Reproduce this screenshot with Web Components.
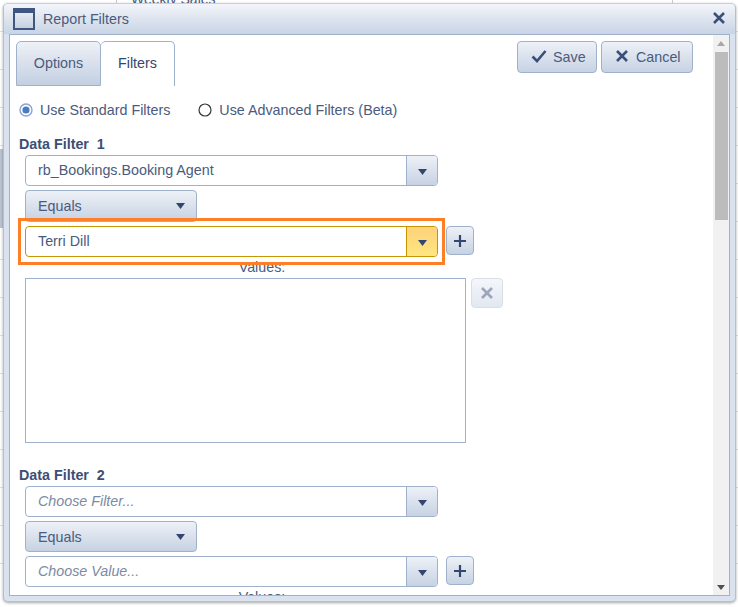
<!DOCTYPE html>
<html>
<head>
<meta charset="utf-8">
<title>Report Filters</title>
<style>
  html, body { margin: 0; height: 100%; overflow: hidden; background: #fff; }
  body { font: 14.3px "Liberation Sans", Arial, sans-serif; color: #4a5b7d; }
</style>
</head>
<body>
<page-backdrop></page-backdrop>
<report-dialog heading="Report Filters">
  <tab-bar slot="top">
    <tab-item>Options</tab-item>
    <tab-item active>Filters</tab-item>
    <action-button slot="actions" icon="check">Save</action-button>
    <action-button slot="actions" icon="cross">Cancel</action-button>
  </tab-bar>
  <radio-row>
    <radio-option checked>Use Standard Filters</radio-option>
    <radio-option>Use Advanced Filters (Beta)</radio-option>
  </radio-row>
  <data-filter number="1" field="rb_Bookings.Booking Agent" value="Terri Dill" highlight></data-filter>
  <data-filter number="2" placeholder></data-filter>
</report-dialog>

<script>
const ICONS = {
  check: '<svg width="16" height="14" viewBox="0 0 16 14"><path d="M1.5 7.5 6 12 14.5 2" fill="none" stroke="#3c4f78" stroke-width="2.6"/></svg>',
  cross: '<svg width="12" height="12" viewBox="0 0 12 12"><path d="M1 1 11 11M11 1 1 11" fill="none" stroke="#3c4f78" stroke-width="2.6"/></svg>',
  plus: '<svg width="12" height="12" viewBox="0 0 12 12"><path d="M6 0V12M0 6H12" fill="none" stroke="#33466e" stroke-width="2.2"/></svg>',
  arrow: '<svg width="9" height="6" viewBox="0 0 9 6"><path d="M0 0H9L4.5 6Z" fill="#33466e"/></svg>'
};

// Faint report page showing behind the dialog
class PageBackdrop extends HTMLElement {
  constructor() {
    super();
    this.attachShadow({ mode: 'open' }).innerHTML = `
      <style>
        :host {
          position: absolute;
          inset: 0;
          overflow: hidden;
          background: repeating-linear-gradient(#fff 0 37px, #e2e2e2 37px 38px) 0 -6px;
        }
        .title { position: absolute; left: 131px; top: -9px; font-size: 14px; color: #4a5b7d; }
        .line { position: absolute; top: 0; width: 1px; height: 4px; background: #ccc; }
        .side { position: absolute; left: 0; top: 149px; width: 4px; height: 79px; background: #bcc5d2; }
      </style>
      <span class="title">Weekly Sales</span>
      <i class="line" style="left:116px"></i>
      <i class="line" style="left:672px"></i>
      <i class="side"></i>
    `;
  }
}

class ReportDialog extends HTMLElement {
  constructor() {
    super();
    this.attachShadow({ mode: 'open' }).innerHTML = `
      <style>
        :host {
          position: absolute;
          left: 3px;
          top: 3px;
          width: 733px;
          height: 599px;
          box-sizing: border-box;
          display: flex;
          flex-direction: column;
          background: #d9e2ee;
          border: 1px solid #b4c0d2;
          border-top-color: #c5cfdf;
          border-radius: 5px;
          box-shadow: 0 1px 3px rgba(0, 0, 0, 0.35);
          overflow: hidden;
        }
        .titlebar {
          flex: none;
          height: 30px;
          display: flex;
          align-items: center;
          gap: 8px;
          padding: 0 10px 0 9px;
          background: linear-gradient(#f3f5fa, #c8d4e5);
          color: #4a5b7d;
        }
        .winicon {
          width: 22px;
          height: 22px;
          box-sizing: border-box;
          border: 2px solid #3f5680;
          border-top-width: 5px;
          background: linear-gradient(#e6ebf3, #c5d0e0);
        }
        .name { flex: 1; }
        .close { display: flex; margin-top: -2px; }
        .body {
          flex: none;
          height: 562px;
          margin: 0 5px;
          box-sizing: border-box;
          display: flex;
          border: 1px solid #a0b1cc;
          background: #fff;
        }
        .pane { flex: 1; min-width: 0; overflow: hidden; padding: 6px 0 0 6px; }
        .scroll {
          flex: none;
          width: 16px;
          display: flex;
          flex-direction: column;
          align-items: center;
          background: #f1f1f1;
        }
        .up, .down { flex: none; width: 0; height: 0; border: 4px solid transparent; }
        .up { margin-top: 6px; border-top: 0; border-bottom: 5px solid #a8a8a8; }
        .down { margin-top: auto; margin-bottom: 5px; border-bottom: 0; border-top: 5px solid #505050; }
        .thumb { width: 13px; height: 168px; margin-top: 6px; background: #bcbcbc; }
      </style>
      <div class="titlebar">
        <span class="winicon"></span>
        <span class="name"></span>
        <span class="close">${ICONS.cross}</span>
      </div>
      <div class="body">
        <div class="pane"><slot name="top"></slot><slot></slot></div>
        <div class="scroll"><i class="up"></i><i class="thumb"></i><i class="down"></i></div>
      </div>
    `;
  }

  connectedCallback() {
    this.shadowRoot.querySelector('.name').textContent = this.getAttribute('heading') || '';
  }
}

class TabBar extends HTMLElement {
  constructor() {
    super();
    this.attachShadow({ mode: 'open' }).innerHTML = `
      <style>
        :host { display: flex; height: 45px; align-items: flex-start; padding-right: 20px; }
        .tabs { display: flex; flex: 1; }
        .actions { display: flex; gap: 4px; }
      </style>
      <div class="tabs"><slot></slot></div>
      <div class="actions"><slot name="actions"></slot></div>
    `;
  }
}

class TabItem extends HTMLElement {
  constructor() {
    super();
    this.attachShadow({ mode: 'open' }).innerHTML = `
      <style>
        :host {
          display: flex;
          align-items: center;
          justify-content: center;
          box-sizing: border-box;
          width: 85px;
          height: 45px;
          padding-bottom: 2px;
          border: 1px solid #a0b1cc;
          border-radius: 5px 5px 0 0;
          background: linear-gradient(#eef1f7, #c3cfe1);
          color: #4a5b7d;
        }
        :host([active]) {
          width: 74px;
          border-left: 0;
          border-bottom: 0;
          background: #fff;
          color: #33466e;
        }
      </style>
      <slot></slot>
    `;
  }
}

class ActionButton extends HTMLElement {
  constructor() {
    super();
    this.attachShadow({ mode: 'open' }).innerHTML = `
      <style>
        :host {
          display: flex;
          align-items: center;
          box-sizing: border-box;
          width: 80px;
          height: 32px;
          padding-left: 13px;
          gap: 6px;
          border: 1px solid #a0b1cc;
          border-radius: 4px;
          background: linear-gradient(#eef1f7, #c6d2e3);
          color: #4a5b7d;
        }
        :host([icon="cross"]) { width: 92px; padding-left: 14px; gap: 8px; }
        .icon { display: flex; margin-top: -2px; }
      </style>
      <span class="icon"></span><slot></slot>
    `;
  }

  connectedCallback() {
    this.shadowRoot.querySelector('.icon').innerHTML = ICONS[this.getAttribute('icon')] || '';
  }
}

class RadioRow extends HTMLElement {
  constructor() {
    super();
    this.attachShadow({ mode: 'open' }).innerHTML = `
      <style>
        :host { display: flex; gap: 28px; height: 18px; margin: 15px 0 0 3px; align-items: center; }
      </style>
      <slot></slot>
    `;
  }
}

class RadioOption extends HTMLElement {
  constructor() {
    super();
    this.attachShadow({ mode: 'open' }).innerHTML = `
      <style>
        :host { display: flex; align-items: center; gap: 7px; color: #4a5b7d; }
        svg { display: block; }
      </style>
      <span class="mark"></span><slot></slot>
    `;
  }

  connectedCallback() {
    const mark = this.hasAttribute('checked')
      ? '<circle cx="7" cy="7" r="6" fill="#fff" stroke="#8aa3cf" stroke-width="1.4"/><circle cx="7" cy="7" r="3.6" fill="#4a7cc4"/>'
      : '<circle cx="7" cy="7" r="6" fill="#fff" stroke="#333" stroke-width="1.2"/>';
    this.shadowRoot.querySelector('.mark').innerHTML =
      `<svg width="14" height="14" viewBox="0 0 14 14">${mark}</svg>`;
  }
}

class ComboBox extends HTMLElement {
  constructor() {
    super();
    this.attachShadow({ mode: 'open' }).innerHTML = `
      <style>
        :host {
          position: relative;
          display: flex;
          box-sizing: border-box;
          width: 413px;
          height: 31px;
          border: 1px solid #a0b1cc;
          border-radius: 4px;
          background: #fff;
          color: #4a5b7d;
        }
        .text { flex: 1; display: flex; align-items: center; padding: 0 0 2px 12px; }
        .btn {
          width: 30px;
          display: flex;
          align-items: center;
          justify-content: center;
          padding-top: 2px;
          border-left: 1px solid #a0b1cc;
          border-radius: 0 3px 3px 0;
          background: linear-gradient(#eef1f7, #c6d2e3);
        }
        .mark { display: none; }
        :host([placeholder]) .text { font-style: italic; color: #7c8aa4; }
        :host([highlight]) { border-color: #c69500; }
        :host([highlight]) .btn { border-left-color: #c69500; background: linear-gradient(#fdd27a, #ffe680); }
        :host([highlight]) .mark {
          display: block;
          position: absolute;
          left: -8px;
          right: -8px;
          top: -9px;
          bottom: -9px;
          border: 3px solid #ff7f27;
          pointer-events: none;
        }
      </style>
      <div class="text"><slot></slot></div>
      <div class="btn">${ICONS.arrow}</div>
      <div class="mark"></div>
    `;
  }
}

class OperatorSelect extends HTMLElement {
  constructor() {
    super();
    this.attachShadow({ mode: 'open' }).innerHTML = `
      <style>
        :host {
          display: flex;
          align-items: center;
          justify-content: space-between;
          box-sizing: border-box;
          width: 172px;
          height: 32px;
          padding: 0 11px 0 12px;
          border: 1px solid #a0b1cc;
          border-radius: 4px;
          background: linear-gradient(#eef1f7, #c6d2e3);
          color: #4a5b7d;
        }
        :host([compact]) { height: 31px; }
      </style>
      <slot></slot>${ICONS.arrow}
    `;
  }
}

class IconButton extends HTMLElement {
  constructor() {
    super();
    this.attachShadow({ mode: 'open' }).innerHTML = `
      <style>
        :host {
          display: flex;
          align-items: center;
          justify-content: center;
          flex: none;
          box-sizing: border-box;
          width: 28px;
          height: 29px;
          border: 1px solid #a0b1cc;
          border-radius: 4px;
          background: linear-gradient(#eef1f7, #c6d2e3);
        }
        :host([disabled]) {
          width: 32px;
          height: 30px;
          border-color: #d9dfe9;
          background: linear-gradient(#f4f6fa, #e2e8f1);
        }
        :host([disabled]) svg { opacity: 0.45; }
      </style>
      <span style="display:flex"></span>
    `;
  }

  connectedCallback() {
    this.shadowRoot.querySelector('span').innerHTML = ICONS[this.getAttribute('icon')] || '';
  }
}

class DataFilter extends HTMLElement {
  constructor() {
    super();
    this.attachShadow({ mode: 'open' }).innerHTML = `
      <style>
        :host { display: block; margin: 17px 0 24px 3px; }
        h4 {
          margin: 0 0 3px;
          height: 16px;
          font-size: 14.3px;
          line-height: 16px;
          font-weight: bold;
          color: #3b4f76;
          white-space: pre;
        }
        .fields { display: flex; flex-direction: column; gap: 4px; margin-left: 6px; align-items: flex-start; }
        .row { display: flex; gap: 8px; align-items: flex-start; }
        .below { margin-left: 6px; }
        .values { width: 474px; margin-top: 2px; text-align: center; line-height: 16px; height: 16px; }
        .list { display: flex; gap: 5px; margin-top: 3px; align-items: flex-start; }
        .box { width: 441px; height: 165px; box-sizing: border-box; border: 1px solid #a0b1cc; background: #fff; }
      </style>
      <h4></h4>
      <div class="fields">
        <combo-box class="field"></combo-box>
        <operator-select>Equals</operator-select>
        <div class="row">
          <combo-box class="value"></combo-box>
          <icon-button icon="plus"></icon-button>
        </div>
      </div>
      <div class="below">
        <div class="values">Values:</div>
        <div class="list">
          <div class="box"></div>
          <icon-button icon="cross" disabled></icon-button>
        </div>
      </div>
    `;
  }

  connectedCallback() {
    const root = this.shadowRoot;
    root.querySelector('h4').textContent = `Data Filter  ${this.getAttribute('number')}`;
    const field = root.querySelector('.field');
    const value = root.querySelector('.value');
    if (this.hasAttribute('placeholder')) {
      field.setAttribute('placeholder', '');
      value.setAttribute('placeholder', '');
      field.textContent = 'Choose Filter...';
      value.textContent = 'Choose Value...';
      root.querySelector('operator-select').setAttribute('compact', '');
    } else {
      field.textContent = this.getAttribute('field');
      value.textContent = this.getAttribute('value');
    }
    if (this.hasAttribute('highlight')) value.setAttribute('highlight', '');
  }
}

customElements.define('page-backdrop', PageBackdrop);
customElements.define('report-dialog', ReportDialog);
customElements.define('tab-bar', TabBar);
customElements.define('tab-item', TabItem);
customElements.define('action-button', ActionButton);
customElements.define('radio-row', RadioRow);
customElements.define('radio-option', RadioOption);
customElements.define('combo-box', ComboBox);
customElements.define('operator-select', OperatorSelect);
customElements.define('icon-button', IconButton);
customElements.define('data-filter', DataFilter);
</script>
</body>
</html>
